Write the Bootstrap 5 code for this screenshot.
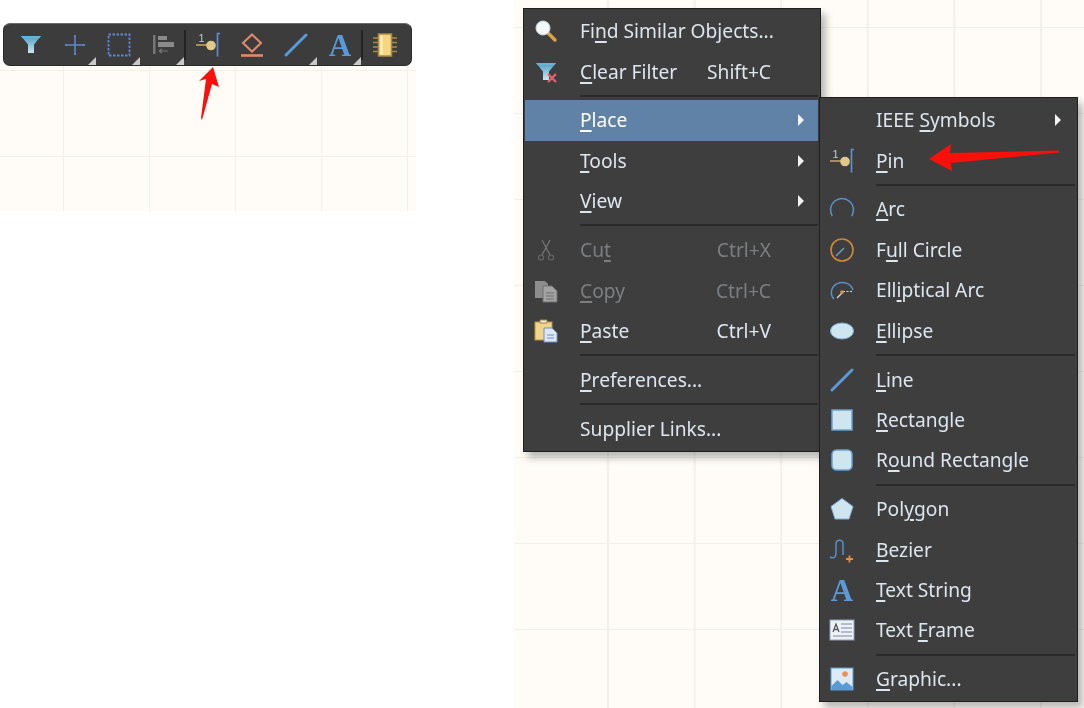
<!DOCTYPE html>
<html lang="en">
  <head>
    <meta charset="UTF-8" />
    <title>Schematic toolbar and context menu</title>
    <link rel="stylesheet" href="https://cdn.jsdelivr.net/npm/bootstrap@5.3.2/dist/css/bootstrap.min.css" />
    <style>
      body {
        width: 1084px;
        height: 708px;
        overflow: hidden;
        background: #fff;
      }
      .sheet {
        background-color: #fffcf8;
        background-image:
          linear-gradient(to right, #f2f0eb 1.5px, transparent 1.5px),
          linear-gradient(to bottom, #f2f0eb 1.5px, transparent 1.5px);
      }
      .left-side {
        width: 416px;
        padding-top: 23px;
      }
      .left-sheet {
        height: 145px;
        background-size: 86px 86px;
        background-position: 63px 4px;
      }
      .right-sheet {
        width: 570px;
        height: 708px;
        margin-left: 98px;
        border-left: 9px solid transparent;
        background-clip: padding-box, border-box;
        background-size: 86.6px 86px;
        background-position: 84px 27px;
      }
      .tool-bar {
        width: 409px;
        height: 43px;
        margin-left: 3px;
        padding-left: 5px;
        background: #3c3c3c;
        border: 1px solid #2b2b2b;
        border-top-color: #6a6a6a;
        border-radius: 7px;
        filter: blur(.35px);
      }
      .tool-btn {
        width: 44px;
        height: 41px;
      }
      .tool-btn svg {
        width: 26px;
        height: 26px;
      }
      .tool-more::after {
        content: "";
        position: absolute;
        right: 1px;
        bottom: 0;
        border-style: solid;
        border-width: 0 0 8px 8px;
        border-color: transparent transparent #c9c9c9 transparent;
      }
      .tool-sep {
        width: 2px;
        height: 30px;
        margin-left: -1px;
        background: #222;
      }
      .ctx-menu {
        --bs-dropdown-min-width: 0;
        width: 298px;
        left: 0;
        top: 8px;
        padding: 2px 2px 2px 1px;
        background: #3e3e3e;
        border: 1px solid #1f1f1f;
        border-radius: 0;
        box-shadow: 5px 6px 7px rgba(60, 60, 60, .35);
        font-family: "Noto Sans", sans-serif;
        font-size: 19.2px;
        filter: blur(.3px);
      }
      .ctx-sub {
        width: 259px;
        left: 296px;
        top: 97px;
        z-index: 1001;
      }
      .ctx-menu .dropdown-item {
        height: 40.4px;
        padding: 0;
        color: #dde5ee;
        line-height: 40px;
      }
      .ctx-menu .dropdown-item.active {
        background: #5f82a6;
        color: #fff;
      }
      .ctx-menu .dropdown-item.disabled {
        color: #7b7f82;
      }
      .ctx-menu u {
        text-underline-offset: 3px;
        text-decoration-thickness: 1.5px;
      }
      .ctx-menu .dropdown-divider {
        height: 2px;
        margin: 3px 0 3.5px 55px;
        background: #2a2a2a;
        border: 0;
        opacity: 1;
      }
      .ico-col {
        width: 55px;
        flex: none;
        padding-left: 8px;
      }
      .ico-col svg {
        display: block;
        width: 26px;
        height: 26px;
      }
      .key-col {
        margin-left: auto;
        margin-right: 47px;
      }
      .more-tri {
        width: 0;
        height: 0;
        margin-left: auto;
        margin-right: 14px;
        border-style: solid;
        border-width: 6px 0 6px 6px;
        border-color: transparent transparent transparent #f2f2f2;
      }
      .red-mark {
        position: absolute;
        left: 0;
        top: 0;
        z-index: 1002;
        pointer-events: none;
      }
    </style>
  </head>
  <body class="position-relative">
    <svg width="0" height="0" class="position-absolute">
      <defs>
        <linearGradient id="fnl" x1="0" y1="0" x2="0" y2="1">
          <stop offset="0" stop-color="#4f9fc4" />
          <stop offset="1" stop-color="#cde6f0" />
        </linearGradient>
        <symbol id="i-funnel" viewBox="0 0 26 26">
          <path d="M3 4h20l-7 8.500v8.500h-6v-8.500z" fill="url(#fnl)" />
          <path d="M3 4h20l-1.500 2h-17z" fill="#62b4d8" />
        </symbol>
        <symbol id="i-pin" viewBox="0 0 26 26">
          <text x="3.500" y="10" font-family="Liberation Sans, sans-serif" font-size="11" fill="#c9c9c9">1</text>
          <path d="M1 13h12" stroke="#c2a263" stroke-width="1.600" />
          <circle cx="16" cy="13.500" r="4.800" fill="#e3c987" />
          <path d="M25 1.500h-2.500v23" fill="none" stroke="#5b8fd0" stroke-width="1.700" />
        </symbol>
        <symbol id="i-line" viewBox="0 0 26 26">
          <path d="M3 23 23 3" stroke="#5a9ad8" stroke-width="3" stroke-linecap="round" />
        </symbol>
        <symbol id="i-a" viewBox="0 0 26 26">
          <text x="13" y="24" text-anchor="middle" font-family="Liberation Serif, serif" font-weight="700" font-size="31" fill="#5a9ad8">A</text>
        </symbol>
      </defs>
    </svg>

    <div class="d-flex">
      <div class="left-side flex-shrink-0">
        <div class="tool-bar d-flex align-items-center">
          <div class="tool-btn position-relative d-flex align-items-center justify-content-center">
            <svg><use href="#i-funnel" /></svg>
          </div>
          <div class="tool-btn tool-more position-relative d-flex align-items-center justify-content-center">
            <svg viewBox="0 0 26 26"><path d="M3 13h20M13 3v20M12 4h2M12 22h2M4 12v2M22 12v2" fill="none" stroke="#5c88cc" stroke-width="1.500" /></svg>
          </div>
          <div class="tool-btn tool-more position-relative d-flex align-items-center justify-content-center">
            <svg viewBox="0 0 26 26"><rect x="2.500" y="2.500" width="21" height="21" fill="none" stroke="#5b86da" stroke-width="1.800" stroke-dasharray="2.500 1.500" /></svg>
          </div>
          <div class="tool-btn tool-more position-relative d-flex align-items-center justify-content-center">
            <svg viewBox="0 0 26 26"><path d="M3 3h2.500v19H3z" fill="#777" /><path d="M8 4h9v4H8zM8 10h16v5H8z" fill="#8a8a8a" /><path d="M9 19h9M9 19l3-2M9 19l3 2" fill="none" stroke="#777" stroke-width="1.200" /></svg>
          </div>
          <div class="tool-sep"></div>
          <div class="tool-btn position-relative d-flex align-items-center justify-content-center">
            <svg><use href="#i-pin" /></svg>
          </div>
          <div class="tool-btn position-relative d-flex align-items-center justify-content-center">
            <svg viewBox="0 0 26 26"><path d="M13 2.500 22 11l-9 8.500L4 11z" fill="none" stroke="#e08c6c" stroke-width="2" /><path d="M2 23.500h22" stroke="#e08c6c" stroke-width="2.600" /></svg>
          </div>
          <div class="tool-btn tool-more position-relative d-flex align-items-center justify-content-center">
            <svg><use href="#i-line" /></svg>
          </div>
          <div class="tool-btn tool-more position-relative d-flex align-items-center justify-content-center">
            <svg><use href="#i-a" /></svg>
          </div>
          <div class="tool-sep"></div>
          <div class="tool-btn position-relative d-flex align-items-center justify-content-center">
            <svg viewBox="0 0 26 26"><path d="M1 6h24M1 10.500h24M1 15h24M1 19.500h24" stroke="#a98a45" stroke-width="1.500" /><rect x="6.500" y="2" width="13" height="22" fill="#f6d680" stroke="#a98a45" stroke-width="1.500" /><rect x="8.500" y="3.500" width="2" height="19" fill="#fff2c8" /></svg>
          </div>
        </div>
        <div class="sheet left-sheet"></div>
      </div>

      <div class="sheet right-sheet position-relative flex-shrink-0">
        <div class="dropdown-menu show ctx-menu">
          <a class="dropdown-item d-flex align-items-center">
            <span class="ico-col"><svg viewBox="0 0 26 26"><path d="M15 15l7 7" stroke="#d9a441" stroke-width="3.500" stroke-linecap="round" /><circle cx="10" cy="10" r="7" fill="#f4f8fb" stroke="#cfd8df" /></svg></span>
            <span>Fi<u>n</u>d Similar Objects...</span>
          </a>
          <a class="dropdown-item d-flex align-items-center">
            <span class="ico-col"><svg viewBox="0 0 26 26"><use href="#i-funnel" /><path d="M15 15l8 8M23 15l-8 8" stroke="#e0636b" stroke-width="2.400" /></svg></span>
            <span><u>C</u>lear Filter</span>
            <span class="key-col">Shift+C</span>
          </a>
          <hr class="dropdown-divider" />
          <a class="dropdown-item active d-flex align-items-center">
            <span class="ico-col"></span>
            <span><u>P</u>lace</span>
            <span class="more-tri"></span>
          </a>
          <a class="dropdown-item d-flex align-items-center">
            <span class="ico-col"></span>
            <span><u>T</u>ools</span>
            <span class="more-tri"></span>
          </a>
          <a class="dropdown-item d-flex align-items-center">
            <span class="ico-col"></span>
            <span><u>V</u>iew</span>
            <span class="more-tri"></span>
          </a>
          <hr class="dropdown-divider" />
          <a class="dropdown-item disabled d-flex align-items-center">
            <span class="ico-col"><svg viewBox="0 0 26 26"><path d="M9 3l8 15M17 3 9 18" stroke="#777" stroke-width="1.200" /><circle cx="8" cy="20.500" r="2.500" fill="none" stroke="#666" stroke-width="1.200" /><circle cx="18" cy="20.500" r="2.500" fill="none" stroke="#666" stroke-width="1.200" /></svg></span>
            <span>Cu<u>t</u></span>
            <span class="key-col">Ctrl+X</span>
          </a>
          <a class="dropdown-item disabled d-flex align-items-center">
            <span class="ico-col"><svg viewBox="0 0 26 26"><path d="M2 3h10l3 3v14H2z" fill="#8c8c8c" /><path d="M10 8h9l5 5v11H10z" fill="#a3a3a3" stroke="#6f6f6f" /><path d="M13 15h8M13 18h8M13 21h8" stroke="#6f6f6f" /></svg></span>
            <span><u>C</u>opy</span>
            <span class="key-col">Ctrl+C</span>
          </a>
          <a class="dropdown-item d-flex align-items-center">
            <span class="ico-col"><svg viewBox="0 0 26 26"><rect x="2" y="4" width="17" height="18" fill="#efd48a" stroke="#b8953f" /><path d="M7 5V2h7v3z" fill="#f7f1dc" stroke="#9a8446" /><path d="M11 10h8l5 5v9H11z" fill="#dde7f6" stroke="#6f8fc4" /><path d="M14 17h7M14 20h7" stroke="#6f8fc4" /></svg></span>
            <span><u>P</u>aste</span>
            <span class="key-col">Ctrl+V</span>
          </a>
          <hr class="dropdown-divider" />
          <a class="dropdown-item d-flex align-items-center">
            <span class="ico-col"></span>
            <span><u>P</u>references...</span>
          </a>
          <hr class="dropdown-divider" />
          <a class="dropdown-item d-flex align-items-center">
            <span class="ico-col"></span>
            <span>Supplier Links...</span>
          </a>
        </div>

        <div class="dropdown-menu show ctx-menu ctx-sub">
          <a class="dropdown-item d-flex align-items-center">
            <span class="ico-col"></span>
            <span>IEEE <u>S</u>ymbols</span>
            <span class="more-tri"></span>
          </a>
          <a class="dropdown-item d-flex align-items-center">
            <span class="ico-col"><svg><use href="#i-pin" /></svg></span>
            <span><u>P</u>in</span>
          </a>
          <hr class="dropdown-divider" />
          <a class="dropdown-item d-flex align-items-center">
            <span class="ico-col"><svg viewBox="0 0 26 26"><path d="M3.200 20A11.500 11.500 0 1 1 22.800 20" fill="none" stroke="#5b8fc9" stroke-width="1.600" /></svg></span>
            <span><u>A</u>rc</span>
          </a>
          <a class="dropdown-item d-flex align-items-center">
            <span class="ico-col"><svg viewBox="0 0 26 26"><circle cx="13" cy="13" r="11" fill="none" stroke="#c9873b" stroke-width="1.700" /><path d="M7 19l8-8" stroke="#6d9bd0" stroke-width="1.500" /></svg></span>
            <span>F<u>u</u>ll Circle</span>
          </a>
          <a class="dropdown-item d-flex align-items-center">
            <span class="ico-col"><svg viewBox="0 0 26 26"><path d="M5 22A11 10 0 1 1 24 13" fill="none" stroke="#5b8fc9" stroke-width="1.500" /><path d="M8 21l6-6" stroke="#ddd" stroke-width="1.200" /><path d="M14 14.500h9" stroke="#ddd" stroke-width="1.200" stroke-dasharray="2 1.500" /><circle cx="13" cy="15" r="1.800" fill="#e2904f" /></svg></span>
            <span>Ell<u>i</u>ptical Arc</span>
          </a>
          <a class="dropdown-item d-flex align-items-center">
            <span class="ico-col"><svg viewBox="0 0 26 26"><ellipse cx="13" cy="13" rx="11.500" ry="8" fill="#cfe5f0" stroke="#7fb0d6" /></svg></span>
            <span><u>E</u>llipse</span>
          </a>
          <hr class="dropdown-divider" />
          <a class="dropdown-item d-flex align-items-center">
            <span class="ico-col"><svg><use href="#i-line" /></svg></span>
            <span><u>L</u>ine</span>
          </a>
          <a class="dropdown-item d-flex align-items-center">
            <span class="ico-col"><svg viewBox="0 0 26 26"><rect x="3" y="3" width="20" height="20" fill="#cfe5f0" stroke="#6ba3d0" stroke-width="1.500" /></svg></span>
            <span><u>R</u>ectangle</span>
          </a>
          <a class="dropdown-item d-flex align-items-center">
            <span class="ico-col"><svg viewBox="0 0 26 26"><rect x="3" y="3" width="20" height="20" rx="4.500" fill="#cfe5f0" stroke="#6ba3d0" stroke-width="1.500" /></svg></span>
            <span>R<u>o</u>und Rectangle</span>
          </a>
          <hr class="dropdown-divider" />
          <a class="dropdown-item d-flex align-items-center">
            <span class="ico-col"><svg viewBox="0 0 26 26"><path d="M13 2.500 24 10.500 20 23H6L2 10.500z" fill="#cfe5f0" stroke="#7fb0d6" /></svg></span>
            <span>Pol<u>y</u>gon</span>
          </a>
          <a class="dropdown-item d-flex align-items-center">
            <span class="ico-col"><svg viewBox="0 0 26 26"><path d="M1 20c4 2 6 0 6-4V7c0-5 7-5 7 0v11" fill="none" stroke="#5b8fc9" stroke-width="1.500" /><path d="M17 22h7M20.500 18.500v7" stroke="#e2923f" stroke-width="1.800" /></svg></span>
            <span><u>B</u>ezier</span>
          </a>
          <a class="dropdown-item d-flex align-items-center">
            <span class="ico-col"><svg><use href="#i-a" /></svg></span>
            <span><u>T</u>ext String</span>
          </a>
          <a class="dropdown-item d-flex align-items-center">
            <span class="ico-col"><svg viewBox="0 0 26 26"><rect x="1" y="3" width="24" height="20" fill="#eef2f8" stroke="#8f9fc0" /><path d="M4 15l3-8 3 8M5 12.500h4" fill="none" stroke="#555" stroke-width="1.300" /><path d="M12 7h11M12 11h11M12 15h11M4 19h19" stroke="#7a86a0" /></svg></span>
            <span>Text <u>F</u>rame</span>
          </a>
          <hr class="dropdown-divider" />
          <a class="dropdown-item d-flex align-items-center">
            <span class="ico-col"><svg viewBox="0 0 26 26"><rect x="2" y="2" width="22" height="22" fill="#dcebf7" stroke="#5b9bd5" /><circle cx="16" cy="8" r="2.800" fill="#ee8f55" /><path d="M2.500 20l6-6 5 5 4-3 6 5v3h-21z" fill="#5b9bd5" /></svg></span>
            <span><u>G</u>raphic...</span>
          </a>
        </div>
      </div>
    </div>

    <svg class="red-mark" width="1084" height="708">
      <path d="M213 67 219 87 212 84 202 120 201 118 206 79 199 81z" fill="#fb0f0a" />
      <path d="M929 159 951 144 950 153 1059 150.500 1059 152.500 951 163 952 171z" fill="#fb0f0a" />
    </svg>
    <script src="https://cdn.jsdelivr.net/npm/bootstrap@5.3.2/dist/js/bootstrap.bundle.min.js"></script>
  </body>
</html>
